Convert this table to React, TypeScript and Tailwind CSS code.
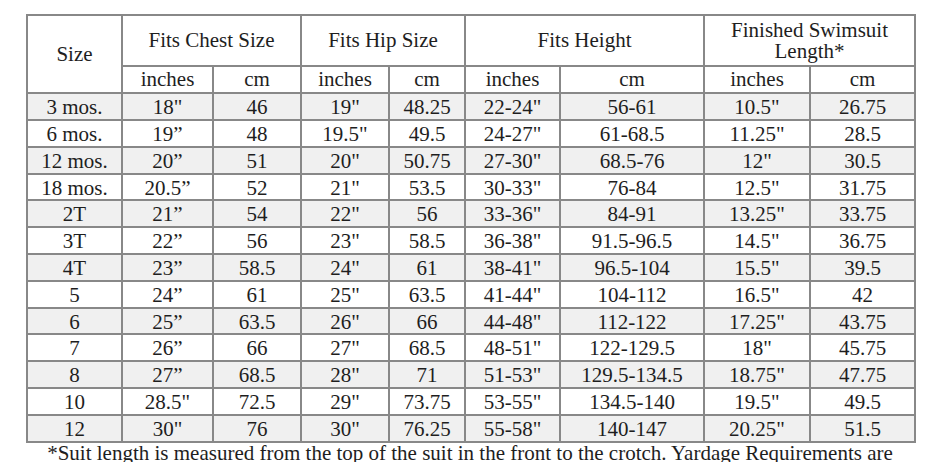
import React from "react";

const rows: string[][] = [
  ["3 mos.", "18\"", "46", "19\"", "48.25", "22-24\"", "56-61", "10.5\"", "26.75"],
  ["6 mos.", "19”", "48", "19.5\"", "49.5", "24-27\"", "61-68.5", "11.25\"", "28.5"],
  ["12 mos.", "20”", "51", "20\"", "50.75", "27-30\"", "68.5-76", "12\"", "30.5"],
  ["18 mos.", "20.5”", "52", "21\"", "53.5", "30-33\"", "76-84", "12.5\"", "31.75"],
  ["2T", "21”", "54", "22\"", "56", "33-36\"", "84-91", "13.25\"", "33.75"],
  ["3T", "22”", "56", "23\"", "58.5", "36-38\"", "91.5-96.5", "14.5\"", "36.75"],
  ["4T", "23”", "58.5", "24\"", "61", "38-41\"", "96.5-104", "15.5\"", "39.5"],
  ["5", "24”", "61", "25\"", "63.5", "41-44\"", "104-112", "16.5\"", "42"],
  ["6", "25”", "63.5", "26\"", "66", "44-48\"", "112-122", "17.25\"", "43.75"],
  ["7", "26”", "66", "27\"", "68.5", "48-51\"", "122-129.5", "18\"", "45.75"],
  ["8", "27”", "68.5", "28\"", "71", "51-53\"", "129.5-134.5", "18.75\"", "47.75"],
  ["10", "28.5\"", "72.5", "29\"", "73.75", "53-55\"", "134.5-140", "19.5\"", "49.5"],
  ["12", "30\"", "76", "30\"", "76.25", "55-58\"", "140-147", "20.25\"", "51.5"],
];

const widths = [95, 91, 88, 88, 76, 95, 144, 106, 105];

export default function App() {
  const cell = "border-2 border-[#888] text-center p-0 leading-none";
  return (
    <div
      className="w-[933px] h-[462px] overflow-hidden bg-white text-[#1e1e1e] pt-[14px] pl-[26px]"
      style={{ fontFamily: '"Liberation Serif", "Times New Roman", serif' }}
    >
      <table className="table-fixed border-collapse w-[888px] text-[21px]">
        <colgroup>
          {widths.map((w, i) => (
            <col key={i} style={{ width: w }} />
          ))}
        </colgroup>
        <thead>
          <tr className="h-[51px]">
            <th rowSpan={2} className={`${cell} font-normal`}>Size</th>
            <th colSpan={2} className={`${cell} font-normal`}>Fits Chest Size</th>
            <th colSpan={2} className={`${cell} font-normal`}>Fits Hip Size</th>
            <th colSpan={2} className={`${cell} font-normal`}>Fits Height</th>
            <th colSpan={2} className={`${cell} font-normal leading-[23px]`}>
              Finished Swimsuit
              <br />
              Length*
            </th>
          </tr>
          <tr className="h-[27px]">
            <th className={`${cell} font-normal`}>inches</th>
            <th className={`${cell} font-normal`}>cm</th>
            <th className={`${cell} font-normal`}>inches</th>
            <th className={`${cell} font-normal`}>cm</th>
            <th className={`${cell} font-normal`}>inches</th>
            <th className={`${cell} font-normal`}>cm</th>
            <th className={`${cell} font-normal`}>inches</th>
            <th className={`${cell} font-normal`}>cm</th>
          </tr>
        </thead>
        <tbody>
          {rows.map((r, i) => (
            <tr
              key={i}
              className={`${i === 3 || i === 8 ? "h-[26px]" : "h-[27px]"} ${
                i % 2 === 0 ? "bg-[#f0f0f0]" : "bg-white"
              }`}
            >
              {r.map((c, j) => (
                <td key={j} className={`${cell} pt-[2px]`}>
                  {c}
                </td>
              ))}
            </tr>
          ))}
        </tbody>
      </table>
      <p className="w-[888px] text-center text-[21px] leading-[19px] whitespace-nowrap pt-[1px]">
        *Suit length is measured from the top of the suit in the front to the crotch. Yardage Requirements are
      </p>
    </div>
  );
}
